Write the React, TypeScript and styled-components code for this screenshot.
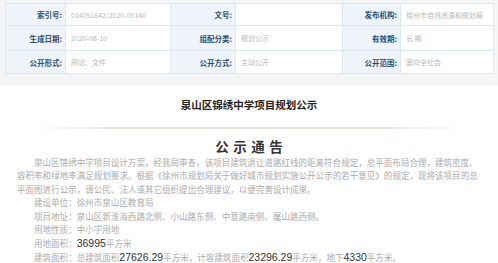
import React from 'react';
import styled, { createGlobalStyle } from 'styled-components';

const GlobalStyle = createGlobalStyle`
  html, body {
    margin: 0;
    padding: 0;
    background: #ffffff;
  }
  body {
    font-family: "Noto Sans CJK SC", "Noto Sans", sans-serif;
  }
`;

const infoRows = [
  [
    ['索引号', '014051642/2020-00140'],
    ['文号', ''],
    ['发布机构', '徐州市自然资源和规划局'],
  ],
  [
    ['生成日期', '2020-08-10'],
    ['组配分类', '规划公示'],
    ['有效期', '长 期'],
  ],
  [
    ['公开形式', '网站、文件'],
    ['公开方式', '主动公开'],
    ['公开范围', '面向全社会'],
  ],
];

const Notice = () => {
  return (
    <Page>
      <GlobalStyle />
      <InfoSection>
        <InfoTable>
          {infoRows.map((row) =>
            row.map(([label, value]) => (
              <React.Fragment key={label + value}>
                <LabelCell>{label}:</LabelCell>
                <ValueCell>{value}</ValueCell>
              </React.Fragment>
            ))
          )}
        </InfoTable>
      </InfoSection>

      <Article>
        <Title>泉山区锦绣中学项目规划公示</Title>
        <Divider />
        <Heading>公示通告</Heading>
        <Body>
          <Line indent>
            泉山区锦绣中学项目设计方案，经我局审查，该项目建筑退让道路红线的距离符合规定，总平面布局合理，建筑密度、
          </Line>
          <Line>
            容积率和绿地率满足规划要求。根据《徐州市规划局关于做好城市规划实施公开公示的若干意见》的规定，现将该项目的总
          </Line>
          <Line>平面图进行公示，请公民、法人或其它组织提出合理建议，以便完善设计成果。</Line>
          <Line indent>建设单位：徐州市泉山区教育局</Line>
          <Line indent>项目地址：泉山区新淮海西路北侧、小山路东侧、中意路南侧、屠山路西侧。</Line>
          <Line indent>用地性质：中小学用地</Line>
          <Line indent>
            用地面积：<Num>36995</Num>平方米
          </Line>
          <Line indent>
            建筑面积：总建筑面积<Num>27626.29</Num>平方米，计容建筑面积<Num>23296.29</Num>平方米，地下
            <Num>4330</Num>平方米。
          </Line>
        </Body>
      </Article>
    </Page>
  );
};

const Page = styled.div`
  width: 498px;
  height: 263px;
  overflow: hidden;
  background: #ffffff;
`;

const InfoSection = styled.div`
  background: #f4f5f6;
  padding: 3px 4px 11px 5px;
`;

const InfoTable = styled.div`
  display: grid;
  grid-template-columns: 59px 104px 64px 106px 57px 92px;
  grid-template-rows: 21px 24px 22px;
  gap: 1px;
  padding: 1px;
  width: max-content;
  background: #dde7ef;
`;

const LabelCell = styled.div`
  display: flex;
  align-items: center;
  justify-content: flex-end;
  padding-right: 3px;
  background: #eef4f9;
  color: #2f4e6e;
  font-size: 7.5px;
  font-weight: 700;
  white-space: nowrap;
`;

const ValueCell = styled.div`
  display: flex;
  align-items: center;
  padding-left: 5px;
  background: #ffffff;
  color: #b8b8b8;
  font-size: 7px;
  white-space: nowrap;
`;

const Article = styled.div`
  padding-top: 13px;
`;

const Title = styled.div`
  text-align: center;
  font-size: 10.5px;
  line-height: 14px;
  font-weight: 700;
  color: #222222;
`;

const Divider = styled.div`
  height: 2px;
  margin: 15px 28px 0;
  background: linear-gradient(
    to right,
    rgba(226, 234, 224, 0),
    #e3ebe1 20%,
    #e3ebe1 80%,
    rgba(226, 234, 224, 0)
  );
`;

const Heading = styled.div`
  margin-top: 10px;
  text-align: center;
  font-size: 13.5px;
  line-height: 14px;
  font-weight: 700;
  letter-spacing: 4.5px;
  padding-left: 4.5px;
  color: #333333;
`;

const Body = styled.div`
  padding: 2.5px 0 0 17px;
  font-size: 8.54px;
  line-height: 13.6px;
  color: #ababab;
`;

const Line = styled.div<{ indent?: boolean }>`
  white-space: nowrap;
  padding-left: ${(p) => (p.indent ? '17px' : '0')};
`;

const Num = styled.span`
  font-family: "Liberation Sans", "Noto Sans", sans-serif;
  font-size: 10.5px;
  color: #333333;
`;

export default Notice;
